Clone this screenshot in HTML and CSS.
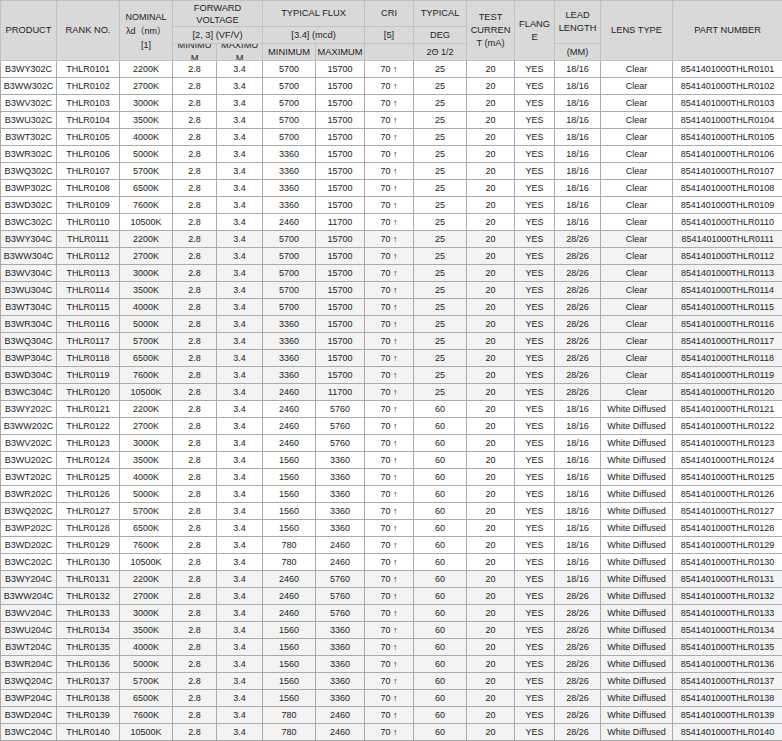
FILE: index.html
```html
<!DOCTYPE html>
<html lang="en">
<head>
<meta charset="utf-8">
<title>LED product table</title>
<link rel="stylesheet" href="styles.css">
</head>
<body>
<table class="spec">
<colgroup>
<col class="c1"><col class="c2"><col class="c3"><col class="c4"><col class="c5"><col class="c6"><col class="c7"><col class="c8"><col class="c9"><col class="c10"><col class="c11"><col class="c12"><col class="c13"><col class="c14">
</colgroup>
<thead>
<tr class="h1">
<th rowspan="3">PRODUCT</th>
<th rowspan="3">RANK NO.</th>
<th rowspan="3" class="nominal">NOMINAL<br>λd（nm）<br>[1]</th>
<th colspan="2" class="pair">FORWARD VOLTAGE</th>
<th colspan="2">TYPICAL FLUX</th>
<th>CRI</th>
<th>TYPICAL</th>
<th rowspan="3">TEST CURRENT (mA)</th>
<th rowspan="3">FLANGE</th>
<th rowspan="2">LEAD LENGTH</th>
<th rowspan="3">LENS TYPE</th>
<th rowspan="3">PART NUMBER</th>
</tr>
<tr class="h2">
<th colspan="2">[2, 3] (VF/V)</th>
<th colspan="2">[3.4] (mcd)</th>
<th>[5]</th>
<th>DEG</th>
</tr>
<tr class="h3">
<th><div class="clip"><span>MINIMUM</span></div></th>
<th><div class="clip"><span>MAXIMUM</span></div></th>
<th>MINIMUM</th>
<th>MAXIMUM</th>
<th></th>
<th class="angle">2Θ 1/2</th>
<th>(MM)</th>
</tr>
</thead>
<tbody>
<tr><td>B3WY302C</td><td>THLR0101</td><td>2200K</td><td>2.8</td><td>3.4</td><td>5700</td><td>15700</td><td>70 ↑</td><td>25</td><td>20</td><td>YES</td><td>18/16</td><td>Clear</td><td>8541401000THLR0101</td></tr>
<tr><td>B3WW302C</td><td>THLR0102</td><td>2700K</td><td>2.8</td><td>3.4</td><td>5700</td><td>15700</td><td>70 ↑</td><td>25</td><td>20</td><td>YES</td><td>18/16</td><td>Clear</td><td>8541401000THLR0102</td></tr>
<tr><td>B3WV302C</td><td>THLR0103</td><td>3000K</td><td>2.8</td><td>3.4</td><td>5700</td><td>15700</td><td>70 ↑</td><td>25</td><td>20</td><td>YES</td><td>18/16</td><td>Clear</td><td>8541401000THLR0103</td></tr>
<tr><td>B3WU302C</td><td>THLR0104</td><td>3500K</td><td>2.8</td><td>3.4</td><td>5700</td><td>15700</td><td>70 ↑</td><td>25</td><td>20</td><td>YES</td><td>18/16</td><td>Clear</td><td>8541401000THLR0104</td></tr>
<tr><td>B3WT302C</td><td>THLR0105</td><td>4000K</td><td>2.8</td><td>3.4</td><td>5700</td><td>15700</td><td>70 ↑</td><td>25</td><td>20</td><td>YES</td><td>18/16</td><td>Clear</td><td>8541401000THLR0105</td></tr>
<tr><td>B3WR302C</td><td>THLR0106</td><td>5000K</td><td>2.8</td><td>3.4</td><td>3360</td><td>15700</td><td>70 ↑</td><td>25</td><td>20</td><td>YES</td><td>18/16</td><td>Clear</td><td>8541401000THLR0106</td></tr>
<tr><td>B3WQ302C</td><td>THLR0107</td><td>5700K</td><td>2.8</td><td>3.4</td><td>3360</td><td>15700</td><td>70 ↑</td><td>25</td><td>20</td><td>YES</td><td>18/16</td><td>Clear</td><td>8541401000THLR0107</td></tr>
<tr><td>B3WP302C</td><td>THLR0108</td><td>6500K</td><td>2.8</td><td>3.4</td><td>3360</td><td>15700</td><td>70 ↑</td><td>25</td><td>20</td><td>YES</td><td>18/16</td><td>Clear</td><td>8541401000THLR0108</td></tr>
<tr><td>B3WD302C</td><td>THLR0109</td><td>7600K</td><td>2.8</td><td>3.4</td><td>3360</td><td>15700</td><td>70 ↑</td><td>25</td><td>20</td><td>YES</td><td>18/16</td><td>Clear</td><td>8541401000THLR0109</td></tr>
<tr><td>B3WC302C</td><td>THLR0110</td><td>10500K</td><td>2.8</td><td>3.4</td><td>2460</td><td>11700</td><td>70 ↑</td><td>25</td><td>20</td><td>YES</td><td>18/16</td><td>Clear</td><td>8541401000THLR0110</td></tr>
<tr class="alt"><td>B3WY304C</td><td>THLR0111</td><td>2200K</td><td>2.8</td><td>3.4</td><td>5700</td><td>15700</td><td>70 ↑</td><td>25</td><td>20</td><td>YES</td><td>28/26</td><td>Clear</td><td>8541401000THLR0111</td></tr>
<tr class="alt"><td>B3WW304C</td><td>THLR0112</td><td>2700K</td><td>2.8</td><td>3.4</td><td>5700</td><td>15700</td><td>70 ↑</td><td>25</td><td>20</td><td>YES</td><td>28/26</td><td>Clear</td><td>8541401000THLR0112</td></tr>
<tr class="alt"><td>B3WV304C</td><td>THLR0113</td><td>3000K</td><td>2.8</td><td>3.4</td><td>5700</td><td>15700</td><td>70 ↑</td><td>25</td><td>20</td><td>YES</td><td>28/26</td><td>Clear</td><td>8541401000THLR0113</td></tr>
<tr class="alt"><td>B3WU304C</td><td>THLR0114</td><td>3500K</td><td>2.8</td><td>3.4</td><td>5700</td><td>15700</td><td>70 ↑</td><td>25</td><td>20</td><td>YES</td><td>28/26</td><td>Clear</td><td>8541401000THLR0114</td></tr>
<tr class="alt"><td>B3WT304C</td><td>THLR0115</td><td>4000K</td><td>2.8</td><td>3.4</td><td>5700</td><td>15700</td><td>70 ↑</td><td>25</td><td>20</td><td>YES</td><td>28/26</td><td>Clear</td><td>8541401000THLR0115</td></tr>
<tr class="alt"><td>B3WR304C</td><td>THLR0116</td><td>5000K</td><td>2.8</td><td>3.4</td><td>3360</td><td>15700</td><td>70 ↑</td><td>25</td><td>20</td><td>YES</td><td>28/26</td><td>Clear</td><td>8541401000THLR0116</td></tr>
<tr class="alt"><td>B3WQ304C</td><td>THLR0117</td><td>5700K</td><td>2.8</td><td>3.4</td><td>3360</td><td>15700</td><td>70 ↑</td><td>25</td><td>20</td><td>YES</td><td>28/26</td><td>Clear</td><td>8541401000THLR0117</td></tr>
<tr class="alt"><td>B3WP304C</td><td>THLR0118</td><td>6500K</td><td>2.8</td><td>3.4</td><td>3360</td><td>15700</td><td>70 ↑</td><td>25</td><td>20</td><td>YES</td><td>28/26</td><td>Clear</td><td>8541401000THLR0118</td></tr>
<tr class="alt"><td>B3WD304C</td><td>THLR0119</td><td>7600K</td><td>2.8</td><td>3.4</td><td>3360</td><td>15700</td><td>70 ↑</td><td>25</td><td>20</td><td>YES</td><td>28/26</td><td>Clear</td><td>8541401000THLR0119</td></tr>
<tr class="alt"><td>B3WC304C</td><td>THLR0120</td><td>10500K</td><td>2.8</td><td>3.4</td><td>2460</td><td>11700</td><td>70 ↑</td><td>25</td><td>20</td><td>YES</td><td>28/26</td><td>Clear</td><td>8541401000THLR0120</td></tr>
<tr><td>B3WY202C</td><td>THLR0121</td><td>2200K</td><td>2.8</td><td>3.4</td><td>2460</td><td>5760</td><td>70 ↑</td><td>60</td><td>20</td><td>YES</td><td>18/16</td><td>White Diffused</td><td>8541401000THLR0121</td></tr>
<tr><td>B3WW202C</td><td>THLR0122</td><td>2700K</td><td>2.8</td><td>3.4</td><td>2460</td><td>5760</td><td>70 ↑</td><td>60</td><td>20</td><td>YES</td><td>18/16</td><td>White Diffused</td><td>8541401000THLR0122</td></tr>
<tr><td>B3WV202C</td><td>THLR0123</td><td>3000K</td><td>2.8</td><td>3.4</td><td>2460</td><td>5760</td><td>70 ↑</td><td>60</td><td>20</td><td>YES</td><td>18/16</td><td>White Diffused</td><td>8541401000THLR0123</td></tr>
<tr><td>B3WU202C</td><td>THLR0124</td><td>3500K</td><td>2.8</td><td>3.4</td><td>1560</td><td>3360</td><td>70 ↑</td><td>60</td><td>20</td><td>YES</td><td>18/16</td><td>White Diffused</td><td>8541401000THLR0124</td></tr>
<tr><td>B3WT202C</td><td>THLR0125</td><td>4000K</td><td>2.8</td><td>3.4</td><td>1560</td><td>3360</td><td>70 ↑</td><td>60</td><td>20</td><td>YES</td><td>18/16</td><td>White Diffused</td><td>8541401000THLR0125</td></tr>
<tr><td>B3WR202C</td><td>THLR0126</td><td>5000K</td><td>2.8</td><td>3.4</td><td>1560</td><td>3360</td><td>70 ↑</td><td>60</td><td>20</td><td>YES</td><td>18/16</td><td>White Diffused</td><td>8541401000THLR0126</td></tr>
<tr><td>B3WQ202C</td><td>THLR0127</td><td>5700K</td><td>2.8</td><td>3.4</td><td>1560</td><td>3360</td><td>70 ↑</td><td>60</td><td>20</td><td>YES</td><td>18/16</td><td>White Diffused</td><td>8541401000THLR0127</td></tr>
<tr><td>B3WP202C</td><td>THLR0128</td><td>6500K</td><td>2.8</td><td>3.4</td><td>1560</td><td>3360</td><td>70 ↑</td><td>60</td><td>20</td><td>YES</td><td>18/16</td><td>White Diffused</td><td>8541401000THLR0128</td></tr>
<tr><td>B3WD202C</td><td>THLR0129</td><td>7600K</td><td>2.8</td><td>3.4</td><td>780</td><td>2460</td><td>70 ↑</td><td>60</td><td>20</td><td>YES</td><td>18/16</td><td>White Diffused</td><td>8541401000THLR0129</td></tr>
<tr><td>B3WC202C</td><td>THLR0130</td><td>10500K</td><td>2.8</td><td>3.4</td><td>780</td><td>2460</td><td>70 ↑</td><td>60</td><td>20</td><td>YES</td><td>18/16</td><td>White Diffused</td><td>8541401000THLR0130</td></tr>
<tr class="alt"><td>B3WY204C</td><td>THLR0131</td><td>2200K</td><td>2.8</td><td>3.4</td><td>2460</td><td>5760</td><td>70 ↑</td><td>60</td><td>20</td><td>YES</td><td>18/16</td><td>White Diffused</td><td>8541401000THLR0131</td></tr>
<tr class="alt"><td>B3WW204C</td><td>THLR0132</td><td>2700K</td><td>2.8</td><td>3.4</td><td>2460</td><td>5760</td><td>70 ↑</td><td>60</td><td>20</td><td>YES</td><td>28/26</td><td>White Diffused</td><td>8541401000THLR0132</td></tr>
<tr class="alt"><td>B3WV204C</td><td>THLR0133</td><td>3000K</td><td>2.8</td><td>3.4</td><td>2460</td><td>5760</td><td>70 ↑</td><td>60</td><td>20</td><td>YES</td><td>28/26</td><td>White Diffused</td><td>8541401000THLR0133</td></tr>
<tr class="alt"><td>B3WU204C</td><td>THLR0134</td><td>3500K</td><td>2.8</td><td>3.4</td><td>1560</td><td>3360</td><td>70 ↑</td><td>60</td><td>20</td><td>YES</td><td>28/26</td><td>White Diffused</td><td>8541401000THLR0134</td></tr>
<tr class="alt"><td>B3WT204C</td><td>THLR0135</td><td>4000K</td><td>2.8</td><td>3.4</td><td>1560</td><td>3360</td><td>70 ↑</td><td>60</td><td>20</td><td>YES</td><td>28/26</td><td>White Diffused</td><td>8541401000THLR0135</td></tr>
<tr class="alt"><td>B3WR204C</td><td>THLR0136</td><td>5000K</td><td>2.8</td><td>3.4</td><td>1560</td><td>3360</td><td>70 ↑</td><td>60</td><td>20</td><td>YES</td><td>28/26</td><td>White Diffused</td><td>8541401000THLR0136</td></tr>
<tr class="alt"><td>B3WQ204C</td><td>THLR0137</td><td>5700K</td><td>2.8</td><td>3.4</td><td>1560</td><td>3360</td><td>70 ↑</td><td>60</td><td>20</td><td>YES</td><td>28/26</td><td>White Diffused</td><td>8541401000THLR0137</td></tr>
<tr class="alt"><td>B3WP204C</td><td>THLR0138</td><td>6500K</td><td>2.8</td><td>3.4</td><td>1560</td><td>3360</td><td>70 ↑</td><td>60</td><td>20</td><td>YES</td><td>28/26</td><td>White Diffused</td><td>8541401000THLR0138</td></tr>
<tr class="alt"><td>B3WD204C</td><td>THLR0139</td><td>7600K</td><td>2.8</td><td>3.4</td><td>780</td><td>2460</td><td>70 ↑</td><td>60</td><td>20</td><td>YES</td><td>28/26</td><td>White Diffused</td><td>8541401000THLR0139</td></tr>
<tr class="alt"><td>B3WC204C</td><td>THLR0140</td><td>10500K</td><td>2.8</td><td>3.4</td><td>780</td><td>2460</td><td>70 ↑</td><td>60</td><td>20</td><td>YES</td><td>28/26</td><td>White Diffused</td><td>8541401000THLR0140</td></tr>
</tbody>
</table>
</body>
</html>
```

FILE: styles.css
```css
html, body {
  margin: 0;
  padding: 0;
  background: #fff;
}

.spec {
  width: 782px;
  table-layout: fixed;
  border-collapse: collapse;
  font-family: "Liberation Sans", "Noto Sans CJK SC", Arial, sans-serif;
  font-size: 9px;
  color: #222;
  text-align: center;
}

.c1 { width: 56px; }
.c2 { width: 63px; }
.c3 { width: 53px; }
.c4 { width: 44px; }
.c5 { width: 46px; }
.c6 { width: 53px; }
.c7 { width: 49px; }
.c8 { width: 49px; }
.c9 { width: 53px; }
.c10 { width: 48px; }
.c11 { width: 40px; }
.c12 { width: 46px; }
.c13 { width: 72px; }
.c14 { width: 110px; }

th {
  padding: 0 3px;
  border: 1px solid #c2c2c2;
  background: #d9d9d9;
  font-weight: normal;
  line-height: 13px;
  font-size: 9.3px;
  overflow-wrap: anywhere;
}

.nominal {
  font-size: 9px;
  line-height: 14px;
}

.angle {
  font-size: 9px;
}

.h1 th { height: 25px; }
.h1 .pair { line-height: 12px; }
.h2 th { height: 16px; }

.h3 th {
  height: 16px;
  padding: 0;
  white-space: nowrap;
}

.clip {
  height: 16px;
  padding: 0 3px;
  overflow: hidden;
  display: flex;
  flex-direction: column;
  justify-content: center;
  white-space: normal;
}

td {
  height: 16px;
  padding: 0;
  border: 1px solid #aaa;
  background: #fff;
  line-height: 13px;
  white-space: nowrap;
  overflow: hidden;
}

.alt td {
  background: #f3f3f3;
}
```
